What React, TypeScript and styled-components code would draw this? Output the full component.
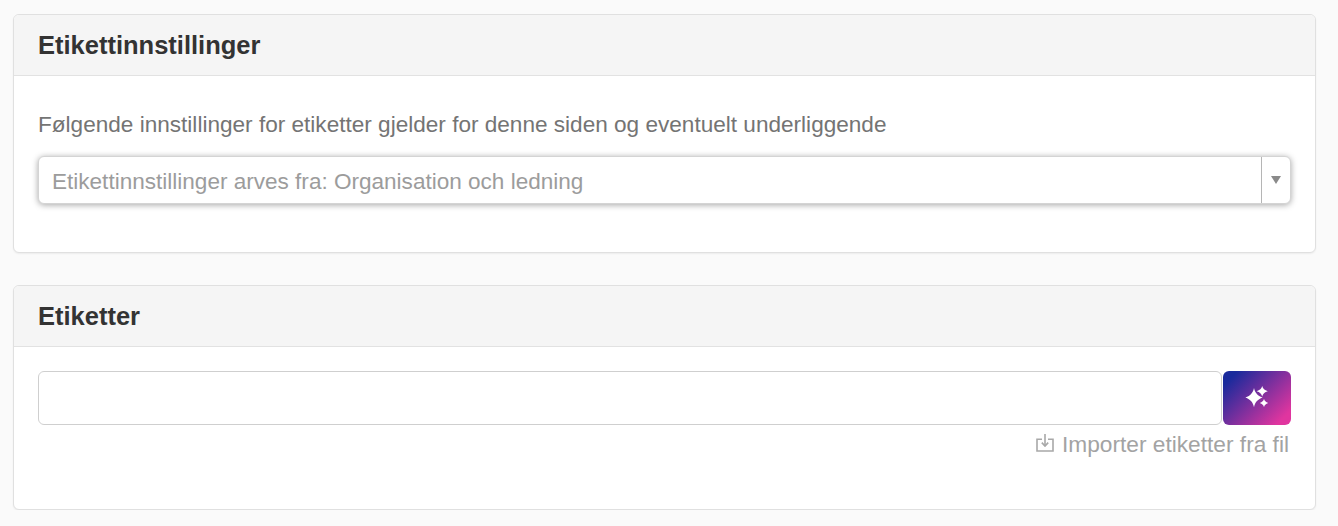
import styled, { createGlobalStyle } from "styled-components"

const GlobalStyle = createGlobalStyle`
    html, body {
        margin: 0;
        padding: 0;
        background-color: #fafafa;
        font-family: "Liberation Sans", Arial, sans-serif;
    }
`;

const Page = styled.div`
    display: flex;
    flex-direction: column;
    gap: 32px;
    width: 1303px;
    padding: 14px 0 0 13px;
`;

const Panel = styled.section<{ $height: number }>`
    display: flex;
    flex-direction: column;
    box-sizing: border-box;
    height: ${(p) => p.$height}px;
    background-color: #fff;
    border: 1px solid #e0e0e0;
    border-radius: 6px;
    box-shadow: 0 1px 2px rgba(0, 0, 0, 0.06);
    overflow: hidden;
`;

const PanelHeader = styled.header`
    box-sizing: border-box;
    height: 61px;
    padding: 0 24px;
    display: flex;
    align-items: center;
    background-color: #f5f5f5;
    border-bottom: 1px solid #e2e2e2;
`;

const PanelTitle = styled.h2`
    margin: 0;
    font-size: 25.5px;
    line-height: 30px;
    font-weight: 700;
    color: #333;
`;

const PanelBody = styled.div<{ $top: number }>`
    display: flex;
    flex-direction: column;
    padding: ${(p) => p.$top}px 24px 0;
`;

const Description = styled.p`
    margin: 0 0 17px;
    font-size: 22.58px;
    line-height: 28px;
    color: #747474;
`;

const SelectBox = styled.div`
    display: flex;
    box-sizing: border-box;
    height: 48px;
    background-color: #fff;
    border-radius: 6px;
    border: 1px solid #d4d4d4;
    box-shadow: 0 1px 6px rgba(0, 0, 0, 0.35);
`;

const SelectValue = styled.div`
    flex: 1;
    display: flex;
    align-items: center;
    padding: 3px 0 0 13px;
    font-size: 22.55px;
    color: #9c9c9c;
`;

const SelectToggle = styled.div`
    width: 28px;
    display: flex;
    align-items: center;
    justify-content: center;
    border-left: 1px solid #b5b5b5;
`;

const Caret = styled.span`
    width: 0;
    height: 0;
    border-left: 5.5px solid transparent;
    border-right: 5.5px solid transparent;
    border-top: 8px solid #8a8a8a;
`;

const TagRow = styled.div`
    display: flex;
    gap: 1px;
    height: 54px;
`;

const TagInput = styled.input`
    flex: 1;
    box-sizing: border-box;
    border: 1px solid #cfcfcf;
    border-radius: 6px;
    background-color: #fff;
    outline: none;
`;

const MagicButton = styled.button`
    width: 68px;
    padding: 0;
    border: none;
    border-radius: 6px;
    display: flex;
    align-items: center;
    justify-content: center;
    background: linear-gradient(135deg, #1a2a9c 12%, #e0359f 88%);
`;

const ImportLink = styled.a`
    display: flex;
    align-items: center;
    justify-content: flex-end;
    gap: 8px;
    margin-top: 5px;
    padding-right: 2px;
    font-size: 22.7px;
    line-height: 28px;
    color: #a3a3a3;
`;

const ImportGlyph = styled.svg`
    margin-bottom: 2px;
`;

function Sparkles() {
    return (
        <svg width="24" height="24" viewBox="0 0 24 24" fill="#fff">
            <path d="M9 2C10 6.6 12.4 9.6 17.6 11.6C12.4 13.6 10 16.6 9 21.2C8 16.6 5.6 13.6 0.4 11.6C5.6 9.6 8 6.6 9 2Z" />
            <path d="M17.2 0C17.8 2.6 19.6 4.2 22.8 5.2C19.6 6.2 17.8 7.8 17.2 10.4C16.6 7.8 14.8 6.2 11.6 5.2C14.8 4.2 16.6 2.6 17.2 0Z" />
            <path d="M19 12.8C19.4 14.8 20.8 16.2 23.2 17C20.8 17.8 19.4 19.2 19 21.2C18.6 19.2 17.2 17.8 14.8 17C17.2 16.2 18.6 14.8 19 12.8Z" />
        </svg>
    );
}

function ImportIcon() {
    return (
        <ImportGlyph width="18" height="18" viewBox="0 0 18 18" fill="none" stroke="#a8a8a8" strokeWidth="1.6">
            <path d="M6 5.2H1V17H17V5.2H12" />
            <path d="M9 0V11.5" />
            <path d="M5.8 8.6L9 12L12.2 8.6" />
        </ImportGlyph>
    );
}

export default function App() {
    return (
        <>
            <GlobalStyle />
            <Page>
                <Panel $height={239}>
                    <PanelHeader>
                        <PanelTitle>Etikettinnstillinger</PanelTitle>
                    </PanelHeader>
                    <PanelBody $top={35}>
                        <Description>
                            Følgende innstillinger for etiketter gjelder for denne siden og eventuelt underliggende
                        </Description>
                        <SelectBox>
                            <SelectValue>Etikettinnstillinger arves fra: Organisation och ledning</SelectValue>
                            <SelectToggle>
                                <Caret />
                            </SelectToggle>
                        </SelectBox>
                    </PanelBody>
                </Panel>
                <Panel $height={225}>
                    <PanelHeader>
                        <PanelTitle>Etiketter</PanelTitle>
                    </PanelHeader>
                    <PanelBody $top={24}>
                        <TagRow>
                            <TagInput />
                            <MagicButton>
                                <Sparkles />
                            </MagicButton>
                        </TagRow>
                        <ImportLink>
                            <ImportIcon />
                            Importer etiketter fra fil
                        </ImportLink>
                    </PanelBody>
                </Panel>
            </Page>
        </>
    );
}
